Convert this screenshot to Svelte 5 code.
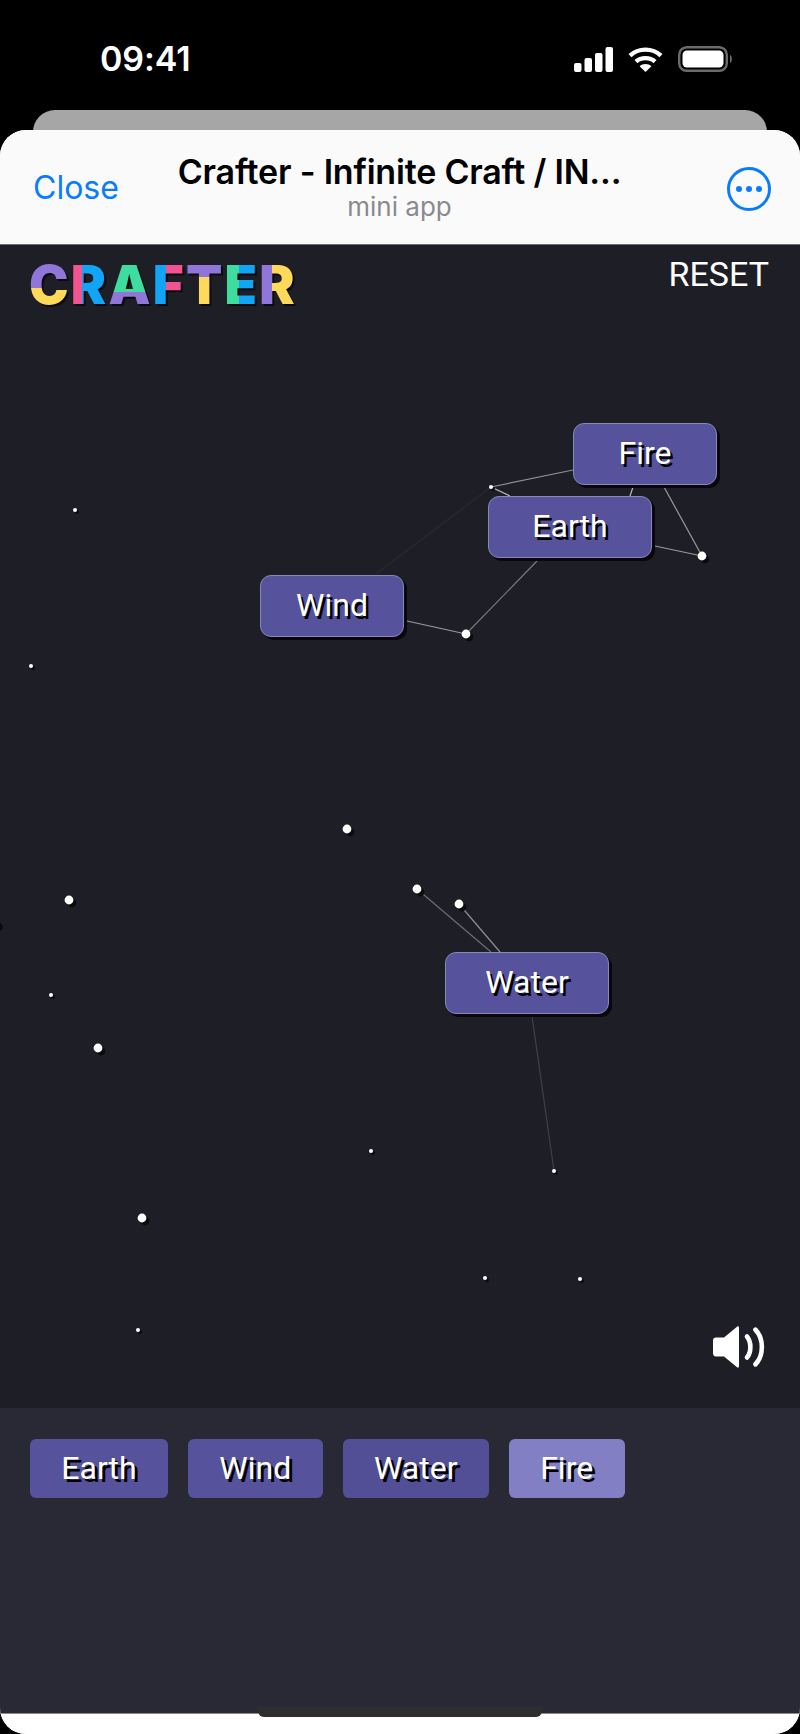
<script lang="ts">
  const top = 245;

  const nodes = [
    { label: "Fire", x: 573, y: 423, w: 144 },
    { label: "Earth", x: 488, y: 496, w: 164 },
    { label: "Wind", x: 260, y: 575, w: 144 },
    { label: "Water", x: 445, y: 952, w: 164 },
  ];

  const dots = [
    [491, 487, 2], [702, 556, 4.4], [466, 634, 4.4], [417, 889, 4.4], [459, 904, 4.4],
    [554, 1171, 2], [75, 510, 2], [31, 666, 2], [347, 829, 4.4], [69, 900, 4.4],
    [51, 995, 2], [98, 1048, 4.4], [371, 1151, 2], [142, 1218, 4.4], [138, 1330, 2],
    [485, 1278, 2], [580, 1279, 2], [-4.6, 924, 4.4],
  ];

  const links = [
    [491, 487, 573, 470, 0.5], [491, 487, 510, 496, 0.7], [633, 487, 630, 496, 0.7],
    [664, 487, 702, 556, 0.55], [655, 546, 702, 556, 0.55], [537, 561, 466, 634, 0.4],
    [407, 621, 466, 634, 0.55], [491, 487, 377, 573, 0.05], [417, 889, 491, 952, 0.35],
    [459, 904, 500, 952, 0.5], [532, 1016, 554, 1171, 0.15],
  ];

  const items = [
    { label: "Earth", kind: "" },
    { label: "Wind", kind: "" },
    { label: "Water", kind: "dim" },
    { label: "Fire", kind: "lit" },
  ];

  const logo = ["c", "r1", "a", "f", "t", "e", "r2"];
  const letters = "CRAFTER".split("");
</script>

<div class="phone">
  <div class="status">
    <span class="clock">09:41</span>
    <div class="status-icons">
      <svg width="39" height="25" viewBox="0 0 39 25" fill="#fff">
        <rect x="0" y="16" width="7.5" height="9" rx="2" />
        <rect x="10.5" y="11" width="7.5" height="14" rx="2" />
        <rect x="21" y="6" width="7.5" height="19" rx="2" />
        <rect x="31.5" y="0" width="7.5" height="25" rx="2" />
      </svg>
      <svg width="35" height="25" viewBox="0 0 35 25" fill="none" stroke="#fff" stroke-width="4.4">
        <path d="M2 8.6 C10.5 .6 24.5 .6 33 8.6" />
        <path d="M8 14.6 C13 10 22 10 27 14.6" />
        <path d="M17.5 25 L11.6 19.2 C14.8 16.4 20.2 16.4 23.4 19.2 Z" fill="#fff" stroke="none" />
      </svg>
      <svg class="battery" width="56" height="26" viewBox="0 0 56 26">
        <rect x="1.2" y="1.2" width="47.6" height="23.6" rx="7.5" fill="none" stroke="#6b6b6b" stroke-width="2.4" />
        <rect x="4.5" y="4.5" width="41" height="17" rx="4.5" fill="#fff" />
        <path d="M52 9 C54.5 10 54.5 16 52 17 Z" fill="#6b6b6b" />
      </svg>
    </div>
  </div>

  <div class="back-card"></div>

  <div class="sheet">
    <header class="head">
      <span class="close">Close</span>
      <div class="titles">
        <div class="title">Crafter - Infinite Craft / IN...</div>
        <div class="sub">mini app</div>
      </div>
      <svg class="more" width="46" height="46" viewBox="0 0 46 46">
        <circle cx="23" cy="23" r="20.5" fill="none" stroke="#0a7aff" stroke-width="3" />
        <circle cx="13" cy="23" r="3" fill="#0a7aff" />
        <circle cx="23" cy="23" r="3" fill="#0a7aff" />
        <circle cx="33" cy="23" r="3" fill="#0a7aff" />
      </svg>
    </header>

    <main class="board">
      <div class="logo">
        {#each letters as l, i}
          <span class="letter {logo[i]}">{l}</span>
        {/each}
      </div>
      <span class="reset">RESET</span>

      <svg class="wires" width="800" height="1163" viewBox="0 {top} 800 1163">
        {#each links as [x1, y1, x2, y2, o]}
          <line {x1} {y1} {x2} {y2} stroke="#fff" stroke-opacity={o} stroke-width="1.2" />
        {/each}
        {#each dots as [cx, cy, r]}
          <circle cx={cx + (r > 2 ? 3 : 2)} cy={cy + (r > 2 ? 3 : 2)} {r} fill="#0b0b0e" />
          <circle {cx} {cy} {r} fill="#fff" />
        {/each}
      </svg>

      {#each nodes as n}
        <div class="node" style="left:{n.x}px;top:{n.y - top}px;width:{n.w}px">{n.label}</div>
      {/each}

      <svg class="sound" width="54" height="44" viewBox="0 0 54 42" preserveAspectRatio="none">
        <path d="M4 12 H12 L25 1.6 C26 .8 27 1.4 27 2.6 V39.4 C27 40.6 26 41.2 25 40.4 L12 30 H4 C2 30 1 29 1 27 V15 C1 13 2 12 4 12 Z" fill="#fff" />
        <path d="M35 11 C39.5 16 39.5 26 35 31" fill="none" stroke="#fff" stroke-width="4.6" stroke-linecap="round" />
        <path d="M43.5 4.5 C52 13 52 29 43.5 37.5" fill="none" stroke="#fff" stroke-width="4.6" stroke-linecap="round" />
      </svg>
    </main>

    <section class="tray">
      {#each items as item}
        <div class="chip {item.kind}">{item.label}</div>
      {/each}
    </section>

    <div class="foot"></div>
    <div class="home-bar"></div>
  </div>
</div>

<style>
  :global(body) {
    margin: 0;
    background: #000;
  }

  .phone {
    position: relative;
    width: 800px;
    height: 1734px;
    overflow: hidden;
    background: #000;
    display: flex;
    flex-direction: column;
    font-family: Inter, "Liberation Sans", sans-serif;
  }

  .status {
    height: 110px;
    box-sizing: border-box;
    padding: 41px 66px 0 100px;
    display: flex;
    justify-content: space-between;
    align-items: flex-start;
    flex-shrink: 0;
  }

  .clock {
    color: #fff;
    font-size: 34px;
    font-weight: 600;
    line-height: 35px;
    letter-spacing: -0.1px;
  }

  .status-icons {
    display: flex;
    align-items: flex-start;
    gap: 15px;
    padding-top: 6px;
  }

  .battery {
    margin-top: -1px;
  }

  .back-card {
    height: 40px;
    margin: 0 33px -20px;
    background: #a6a6a6;
    border-radius: 22px 22px 0 0;
    flex-shrink: 0;
  }

  .sheet {
    position: relative;
    flex: 1;
    display: flex;
    flex-direction: column;
    background: #fff;
    border-radius: 26px;
    overflow: hidden;
  }

  .head {
    height: 115px;
    flex-shrink: 0;
    box-sizing: border-box;
    background: #fafafa;
    border-bottom: 1px solid #6c6c70;
    position: relative;
    display: flex;
    justify-content: space-between;
    align-items: center;
    padding: 0 28px 0 33px;
  }

  .close {
    color: #0a7aff;
    font-size: 32px;
    margin-top: 0;
  }

  .titles {
    position: absolute;
    left: 0;
    right: 0;
    top: 21px;
    text-align: center;
    margin-left: -1px;
  }

  .title {
    color: #000;
    font-size: 34px;
    font-weight: 600;
    line-height: 41px;
    letter-spacing: -0.2px;
  }

  .sub {
    color: #8a8a8e;
    font-size: 26px;
    line-height: 30px;
  }

  .more {
    margin-top: 4px;
  }

  .board {
    position: relative;
    height: 1163px;
    flex-shrink: 0;
    background: #1e1f26;
    font-family: Roboto, "Liberation Sans", sans-serif;
  }

  .wires {
    position: absolute;
    left: 0;
    top: 0;
  }

  .logo {
    position: absolute;
    left: 29px;
    top: 11px;
    display: flex;
    font-family: Inter, sans-serif;
    font-size: 53px;
    font-weight: 900;
    line-height: 58px;
    letter-spacing: 2.2px;
  }

  .letter {
    color: transparent;
    -webkit-background-clip: text;
    background-clip: text;
    filter: drop-shadow(2px 2px 0 #0b0b0e);
  }

  .c { background-image: linear-gradient(#8f76d8 55%, #ffd95a 55%); }
  .r1 { background-image: linear-gradient(90deg, #f2548f 30%, #12a5f5 30%); }
  .a { background-image: linear-gradient(#3fdca0 62%, #8f76d8 62%); }
  .f { background-image: linear-gradient(90deg, #12a5f5 38%, #f2548f 38%); }
  .t { background-image: linear-gradient(#8f76d8 36%, #ffd95a 36%); }
  .e { background-image: linear-gradient(90deg, #3fdca0 40%, #12a5f5 40%); }
  .r2 { background-image: linear-gradient(90deg, #8f76d8 34%, #ffd95a 34%); }

  .reset {
    position: absolute;
    right: 31px;
    top: 9px;
    color: #fff;
    font-size: 34px;
    line-height: 40px;
  }

  .node {
    position: absolute;
    box-sizing: border-box;
    height: 62px;
    line-height: 58px;
    text-align: center;
    color: #fff;
    font-size: 32px;
    background: #56529b;
    border: 1px solid #8a87b8;
    border-radius: 11px;
    box-shadow: 3px 3px 0 #08080b;
    text-shadow: 2.5px 2.5px 0 #000;
  }

  .sound {
    position: absolute;
    left: 712px;
    top: 1080px;
  }

  .tray {
    height: 305px;
    flex-shrink: 0;
    box-sizing: border-box;
    background: #292935;
    padding: 31px 30px 0;
    display: flex;
    gap: 20px;
    align-items: flex-start;
  }

  .chip {
    height: 59px;
    line-height: 59px;
    padding: 0 31.35px;
    border-radius: 6px;
    color: #fff;
    font-family: Roboto, "Liberation Sans", sans-serif;
    font-size: 32px;
    background: #56529b;
    text-shadow: 3px 3px 0 #000;
  }

  .chip.dim {
    background: #524f96;
  }

  .chip.lit {
    background: #827fc4;
  }

  .foot {
    flex: 1;
    background: #fff;
    border-top: 1px solid #8b8b90;
  }

  .home-bar {
    position: absolute;
    left: 258px;
    top: 1577px;
    width: 284px;
    height: 10px;
    background: #2e2e2e;
    border-radius: 0 0 6px 6px;
  }
</style>
